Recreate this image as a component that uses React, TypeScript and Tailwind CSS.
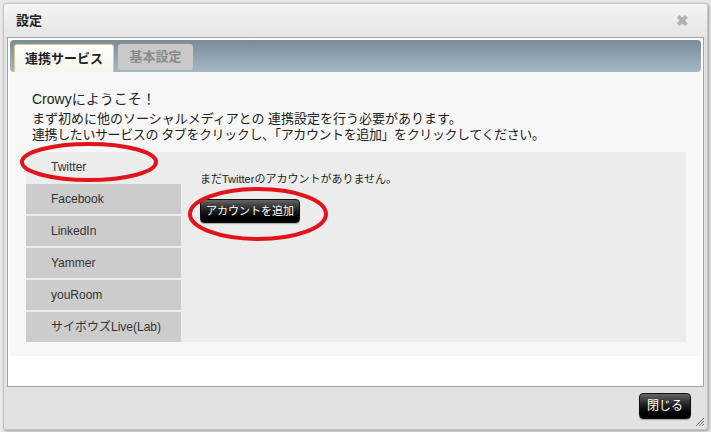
import React from 'react';

const services = ['Twitter', 'Facebook', 'LinkedIn', 'Yammer', 'youRoom', 'サイボウズLive(Lab)'];

function DarkButton({ label, className }: { label: string; className?: string }) {
  return (
    <button
      className={
        'rounded-[4px] border border-[#111] bg-gradient-to-b from-[#666] via-[#1c1c1c] to-[#000] text-white leading-none shadow-[0_1px_1px_rgba(0,0,0,0.3)] ' +
        (className ?? '')
      }
    >
      {label}
    </button>
  );
}

export default function App() {
  return (
    <div
      className="relative w-[711px] h-[432px] bg-[#e9e9e9] pt-[3px] pl-[3px] overflow-hidden"
      style={{ fontFamily: '"Liberation Sans", Arial, "Noto Sans CJK JP", sans-serif' }}
    >
      {/* Dialog */}
      <div className="w-[705px] h-[427px] rounded-[3px] border border-[#c4c4c4] bg-[#e2e2e2] shadow-[1px_1px_3px_rgba(0,0,0,0.35)] flex flex-col">
        {/* Title bar */}
        <div className="h-[33px] shrink-0 flex items-center justify-between pl-[12px] pr-[18px] bg-gradient-to-b from-[#f5f5f5] to-[#e5e5e5] rounded-t-[3px]">
          <span className="text-[13px] font-bold text-[#222]">設定</span>
          <span className="text-[15px] font-bold text-[#b0b0b0] leading-none">✖</span>
        </div>

        {/* Body panel */}
        <div className="mx-[3px] h-[350px] shrink-0 border border-[#a3a3a3] bg-white p-[2px] flex flex-col">
          {/* Tab bar */}
          <div className="h-[32px] shrink-0 rounded-[4px] bg-gradient-to-b from-[#7a8c98] to-[#a4b9c5] flex items-end gap-[4px] pl-[4px]">
            <div className="w-[100px] h-[28px] rounded-t-[3px] border border-b-0 border-[#dcc88c] bg-gradient-to-b from-[#ffffff] to-[#f6f3ea] flex items-center justify-center text-[13px] font-bold text-[#222]">
              連携サービス
            </div>
            <div className="w-[75px] h-[26px] mb-[2px] rounded-[3px] bg-[#c9c9c9] flex items-center justify-center text-[13px] font-bold text-[#8c8c8c]">
              基本設定
            </div>
          </div>

          {/* Content */}
          <div className="h-[284px] shrink-0 bg-[#f7f7f7] pl-[16px] pr-[15px] pt-[19px]">
            <div className="pl-[6px] text-[13px] text-[#222] leading-[16px]">
              <p className="mb-[4px] text-[14px]">Crowyにようこそ！</p>
              <p>まず初めに他のソーシャルメディアとの 連携設定を行う必要があります。</p>
              <p className="tracking-[-0.4px]">連携したいサービスの タブをクリックし、「アカウントを追加」をクリックしてください。</p>
            </div>

            <div className="mt-[9px] h-[190px] bg-[#ececec] flex">
              <div className="w-[155px] flex flex-col gap-[2px]">
                {services.map((s, i) => (
                  <div
                    key={s}
                    className={
                      'h-[30px] flex items-center pl-[25px] text-[12px] text-[#333] ' +
                      (i === 0 ? 'bg-[#ececec]' : 'bg-[#cccccc]')
                    }
                  >
                    {s}
                  </div>
                ))}
              </div>
              <div className="pl-[19px] pt-[20px]">
                <p className="text-[11px] text-[#222] leading-[14px]">まだTwitterのアカウントがありません。</p>
                <DarkButton label="アカウントを追加" className="mt-[13px] w-[100px] h-[24px] text-[11px]" />
              </div>
            </div>
          </div>
        </div>

        {/* Footer */}
        <div className="flex-1 flex justify-end items-start pt-[6px] pr-[16px] relative">
          <DarkButton label="閉じる" className="w-[52px] h-[26px] text-[12px]" />
          <svg className="absolute right-[2px] bottom-[2px]" width="11" height="11" viewBox="0 0 11 11">
            <path d="M10 2 L2 10 M10 5 L5 10 M10 8 L8 10" stroke="#777" strokeWidth="1" />
          </svg>
        </div>
      </div>

      {/* Red annotation ellipses */}
      <svg className="absolute left-0 top-0 pointer-events-none" width="711" height="432">
        <ellipse cx="89" cy="162" rx="67" ry="18" fill="none" stroke="#e3131b" strokeWidth="4" />
        <ellipse cx="258" cy="214" rx="68" ry="25" fill="none" stroke="#e3131b" strokeWidth="4" />
      </svg>
    </div>
  );
}
